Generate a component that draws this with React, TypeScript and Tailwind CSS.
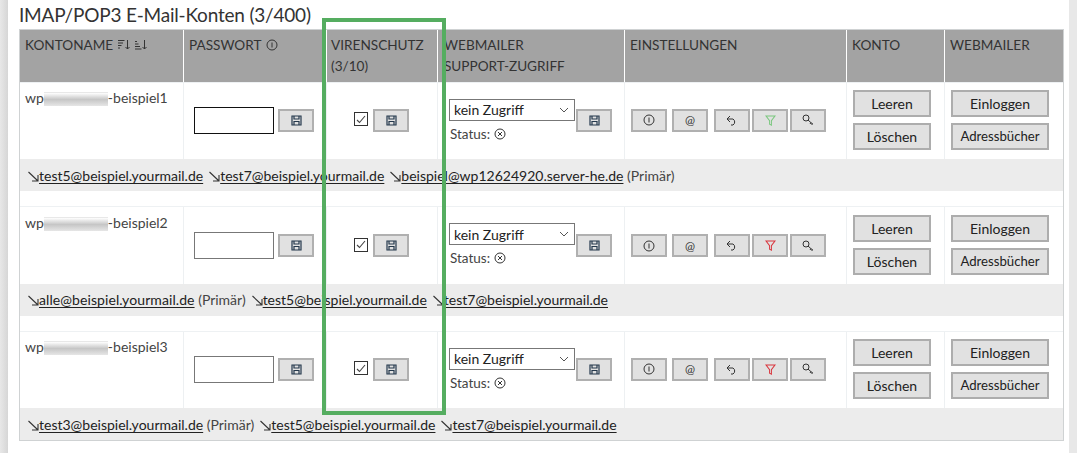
import React from "react";

const font = { fontFamily: '"Lato", "Noto Sans", sans-serif' };

function Save() {
  return (
    <svg width="11" height="11" viewBox="0 0 11 11" fill="none" stroke="#24384c" strokeWidth="1.2">
      <path d="M1 1h9v9H1z" />
      <path d="M3 1v3h5V1M3 10V6.5h5V10" />
    </svg>
  );
}

function IconBtn({ children, cls = "" }: { children?: React.ReactNode; cls?: string }) {
  return (
    <button className={`flex h-[23px] w-[36px] items-center justify-center border-2 border-[#b0b0b0] bg-[#e1e1e1] ${cls}`}>
      {children}
    </button>
  );
}

function SaveBtn() {
  return (
    <IconBtn>
      <Save />
    </IconBtn>
  );
}

function Btn({ label, w, cls = "text-[14px]" }: { label: string; w: string; cls?: string }) {
  return (
    <button className={`h-[27px] border-2 border-[#adadad] bg-[#e1e1e1] text-[#222] ${w} ${cls}`}>{label}</button>
  );
}

function Circle({ children }: { children: React.ReactNode }) {
  return (
    <svg width="12" height="12" viewBox="0 0 12 12" fill="none" stroke="#333" strokeWidth="1">
      <circle cx="6" cy="6" r="5" />
      {children}
    </svg>
  );
}

function Arrow() {
  return (
    <svg width="11" height="11" viewBox="0 0 11 11" fill="none" stroke="#333" strokeWidth="1.1" className="mb-[2px] inline-block">
      <path d="M0.5 1 L10 10 M10 4v6H4" />
    </svg>
  );
}

function Mail({ text, suffix, cls = "" }: { text: string; suffix?: string; cls?: string }) {
  return (
    <span className="mr-[6px] whitespace-nowrap">
      <Arrow />
      <span className={`underline decoration-1 underline-offset-2 ${cls}`}>{text}</span>
      {suffix ? <span className="text-[#444]"> {suffix}</span> : null}
    </span>
  );
}

function Filter({ color }: { color: string }) {
  return (
    <svg width="11" height="11" viewBox="0 0 12 12" fill="none" stroke={color} strokeWidth="1.1">
      <path d="M1 1h10L7 6.2V11L5 10V6.2z" />
    </svg>
  );
}

function SortIcon({ flip }: { flip?: boolean }) {
  return (
    <svg width="12" height="11" viewBox="0 0 12 11" fill="none" stroke="#333" strokeWidth="1" className="inline-block">
      {flip ? <path d="M0 2.5h2M0 5h3.5M0 7.5h5M0 10h6.5" /> : <path d="M0 1.5h6.5M0 4h5M0 6.5h3.5M0 9h2" />}
      <path d="M9.5 1v9M7.5 8l2 2 2-2" />
    </svg>
  );
}

const gridCols = "grid grid-cols-[164px_143px_111px_187px_222px_98px_119px]";

function Row({
  name,
  filter,
  emails,
  tall,
  last,
  focused,
}: {
  name: string;
  filter: string;
  emails: { text: string; suffix?: string; cls?: string }[];
  tall?: boolean;
  last?: boolean;
  focused?: boolean;
}) {
  const adj = tall ? "" : "pb-[2px]";
  return (
    <>
      <div className={`${gridCols} ${tall ? "h-[78px]" : "h-[77px]"} border-t border-[#eef1f3]`}>
        <div className={`border-r border-[#edf0f2] pl-[5px] text-[14px] leading-[17px] text-[#444] ${tall ? "pt-[7px]" : "pt-[6px]"}`}>
          wp
          <span className="inline-block h-[14px] w-[64px] border-t border-[#e8e8e8] bg-gradient-to-b from-white via-[#c6c6c6] to-[#e6e6e6] align-middle" />
          -{name}
        </div>
        <div className={`flex items-center gap-[4px] border-r border-[#edf0f2] pl-[10px] ${adj}`}>
          <div className={`h-[27px] w-[80px] border bg-white ${focused ? "border-[#111]" : "border-[#777]"}`} />
          <SaveBtn />
        </div>
        <div className={`flex items-center gap-[5px] border-r border-[#edf0f2] pl-[27px] ${adj}`}>
          <div className="-mt-[2px] flex h-[14px] w-[14px] items-center justify-center border border-[#333] bg-white">
            <svg width="10" height="9" viewBox="0 0 10 9" fill="none" stroke="#444" strokeWidth="1.1">
              <path d="M1 5l2.5 2.5L9 1" />
            </svg>
          </div>
          <SaveBtn />
        </div>
        <div className={`flex items-center border-r border-[#edf0f2] pl-[11px] ${adj}`}>
          <div className={`flex flex-col gap-[5px] ${tall ? "-mt-[2px]" : ""}`}>
            <div className="flex h-[22px] w-[126px] items-center justify-between border border-[#777] bg-white pl-[4px] pr-[5px] text-[14px] text-[#222]">
              kein Zugriff
              <svg width="10" height="6" viewBox="0 0 10 6" fill="none" stroke="#555" strokeWidth="1">
                <path d="M1 1l4 4 4-4" />
              </svg>
            </div>
            <div className="flex items-center gap-[4px] pl-[1px] text-[13.5px] leading-[16px] text-[#444]">
              Status:
              <svg width="12" height="12" viewBox="0 0 12 12" fill="none" stroke="#333" strokeWidth="1">
                <circle cx="6" cy="6" r="5" />
                <path d="M4 4l4 4M8 4l-4 4" />
              </svg>
            </div>
          </div>
          <div className="ml-[1px]">
            <SaveBtn />
          </div>
        </div>
        <div className={`flex items-center border-r border-[#edf0f2] pl-[6px] ${adj}`}>
          <IconBtn>
            <Circle>
              <path d="M6 3.5v5" />
            </Circle>
          </IconBtn>
          <IconBtn cls="ml-[5px]">
            <span className="text-[12px] leading-none text-[#333]">@</span>
          </IconBtn>
          <IconBtn cls="ml-[6px]">
            <svg width="12" height="11" viewBox="0 0 12 11" fill="none" stroke="#333" strokeWidth="1">
              <path d="M4 1L1 4l3 3M1 4h6a3.5 3.5 0 0 1 0 6H5" />
            </svg>
          </IconBtn>
          <IconBtn cls="ml-[2px]">
            <Filter color={filter} />
          </IconBtn>
          <IconBtn cls="ml-[2px]">
            <svg width="13" height="12" viewBox="0 0 13 12" fill="none" stroke="#333" strokeWidth="1">
              <circle cx="4" cy="4" r="3" />
              <path d="M6 6l5 4.5M9 8.5l-1 1.5M10.5 9.5l-1 1" />
            </svg>
          </IconBtn>
        </div>
        <div className={`flex flex-col gap-[6px] border-r border-[#edf0f2] pl-[6px] ${tall ? "pt-[8px]" : "pt-[7px]"}`}>
          <Btn label="Leeren" w="w-[78px]" />
          <Btn label="Löschen" w="w-[78px]" />
        </div>
        <div className={`flex flex-col gap-[6px] pl-[6px] ${tall ? "pt-[8px]" : "pt-[7px]"}`}>
          <Btn label="Einloggen" w="w-[98px]" />
          <Btn label="Adressbücher" w="w-[98px]" cls="text-[13.2px]" />
        </div>
      </div>
      <div className={`flex h-[32px] items-center bg-[#ececec] pl-[8px] text-[14px] text-[#222] ${tall ? "pb-[1px]" : "pt-[1px]"}`}>
        {emails.map((e) => (
          <Mail key={e.text} text={e.text} suffix={e.suffix} cls={e.cls} />
        ))}
      </div>
      {last ? null : <div className="h-[15px] bg-white" />}
    </>
  );
}

export default function App() {
  return (
    <div className="relative h-[453px] w-[1077px] overflow-hidden bg-white text-[#333]" style={font}>
      <div className="absolute inset-y-0 left-0 w-[8px] bg-gradient-to-r from-[#e8e8e8] to-[#d6d6d6]" />
      <div className="absolute inset-y-0 right-0 w-[8px] bg-[#e8e8e8]" />
      <div className="pl-[19px]">
        <h1 className="pt-[1px] text-[19px] font-normal leading-[28px] tracking-[-0.2px] text-[#333]">
          IMAP/POP3 E-Mail-Konten (3/400)
        </h1>
        <div className="w-[1045px] border border-[#cfd2d3]">
          <div className={`${gridCols} h-[52px] bg-[#a3a3a3] text-[13.6px] leading-[21px] text-[#333]`}>
            <div className="flex items-start gap-[5px] border-r border-white pl-[5px] pt-[5px]">
              KONTONAME
              <span className="mt-[4px] flex gap-[5px]">
                <SortIcon />
                <SortIcon flip />
              </span>
            </div>
            <div className="flex items-start gap-[5px] border-r border-white pl-[5px] pt-[5px]">
              PASSWORT
              <span className="mt-[4px]">
                <Circle>
                  <path d="M6 3.5v5" />
                </Circle>
              </span>
            </div>
            <div className="border-r border-white pl-[4px] pt-[5px]">
              VIRENSCHUTZ
              <br />
              (3/10)
            </div>
            <div className="border-r border-white pl-[6px] pt-[5px]">
              WEBMAILER
              <br />
              SUPPORT-ZUGRIFF
            </div>
            <div className="border-r border-white pl-[5px] pt-[5px]">EINSTELLUNGEN</div>
            <div className="border-r border-white pl-[5px] pt-[5px]">KONTO</div>
            <div className="pl-[5px] pt-[5px]">WEBMAILER</div>
          </div>
          <Row
            name="beispiel1"
            filter="#7bc77f"
            focused
            emails={[
              { text: "test5@beispiel.yourmail.de" },
              { text: "test7@beispiel.yourmail.de" },
              { text: "beispiel@wp12624920.server-he.de", suffix: "(Primär)" },
            ]}
          />
          <Row
            name="beispiel2"
            filter="#d9363e"
            tall
            emails={[
              { text: "alle@beispiel.yourmail.de", suffix: "(Primär)", cls: "tracking-[0.08px]" },
              { text: "test5@beispiel.yourmail.de" },
              { text: "test7@beispiel.yourmail.de" },
            ]}
          />
          <Row
            name="beispiel3"
            filter="#d9363e"
            last
            emails={[
              { text: "test3@beispiel.yourmail.de", suffix: "(Primär)" },
              { text: "test5@beispiel.yourmail.de" },
              { text: "test7@beispiel.yourmail.de" },
            ]}
          />
        </div>
      </div>
      <div className="pointer-events-none absolute left-[322px] top-[18px] h-[397px] w-[124px] border-[4px] border-[#55ad60]" />
    </div>
  );
}
